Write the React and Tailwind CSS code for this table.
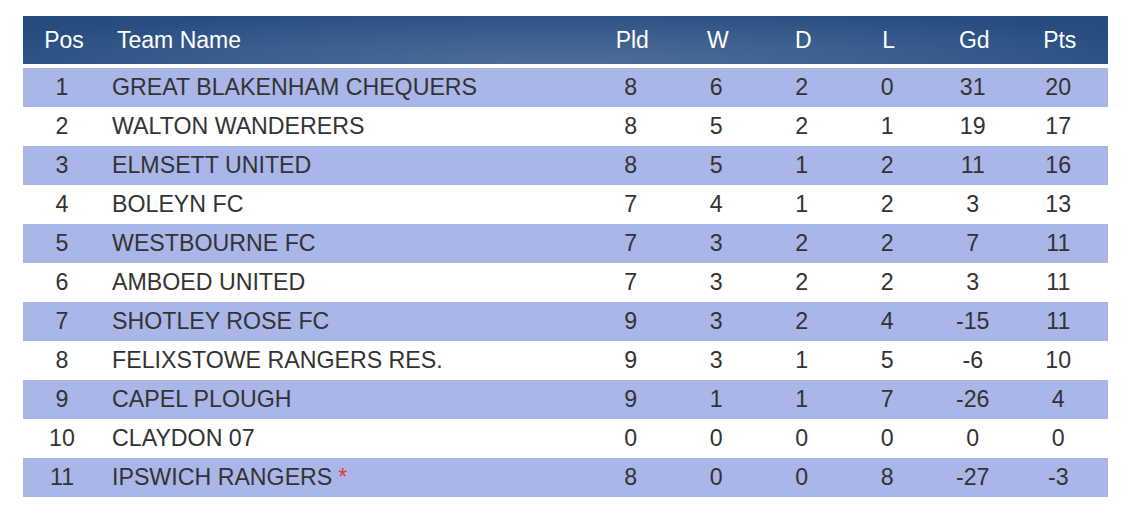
const rows = [
  [1, "GREAT BLAKENHAM CHEQUERS", 8, 6, 2, 0, 31, 20],
  [2, "WALTON WANDERERS", 8, 5, 2, 1, 19, 17],
  [3, "ELMSETT UNITED", 8, 5, 1, 2, 11, 16],
  [4, "BOLEYN FC", 7, 4, 1, 2, 3, 13],
  [5, "WESTBOURNE FC", 7, 3, 2, 2, 7, 11],
  [6, "AMBOED UNITED", 7, 3, 2, 2, 3, 11],
  [7, "SHOTLEY ROSE FC", 9, 3, 2, 4, -15, 11],
  [8, "FELIXSTOWE RANGERS RES.", 9, 3, 1, 5, -6, 10],
  [9, "CAPEL PLOUGH", 9, 1, 1, 7, -26, 4],
  [10, "CLAYDON 07", 0, 0, 0, 0, 0, 0],
  [11, "IPSWICH RANGERS", 8, 0, 0, 8, -27, -3, true],
];

const heads = ["Pld", "W", "D", "L", "Gd", "Pts"];

export default function App() {
  return (
    <div className="min-h-[523px] w-[1130px] bg-white pt-[16px] pl-[23px] font-['Liberation_Sans',Arial,sans-serif]">
      <div className="w-[1085px]">
        {/* header */}
        <div className="flex h-[48px] items-center bg-[radial-gradient(ellipse_60%_120%_at_50%_100%,#4e6e99_0%,#3d608f_45%,#264c80_100%)] text-[23px] text-white">
          <div className="w-[78px] pl-[4px] text-center">Pos</div>
          <div className="flex-1 pl-[16px]">Team Name</div>
          {heads.map((h) => (
            <div key={h} className="w-[85.5px] pl-[3px] text-center">
              {h}
            </div>
          ))}
          <div className="w-[7px]" />
        </div>

        {/* rows */}
        <div className="mt-[4px]">
          {rows.map((r, i) => (
            <div
              key={r[0]}
              className={`flex h-[39px] items-center text-[23.2px] text-[#333333] ${
                i % 2 === 0 ? "bg-[#a9b6e7]" : "bg-white"
              }`}
            >
              <div className="w-[78px] text-center">{r[0]}</div>
              <div className="flex-1 pl-[11px]">
                {r[1]}
                {r[8] && <span className="ml-[6px] text-[#e53935]">*</span>}
              </div>
              {r.slice(2, 8).map((v, j) => (
                <div key={j} className="w-[85.5px] text-center">
                  {v}
                </div>
              ))}
              <div className="w-[7px]" />
            </div>
          ))}
        </div>
      </div>
    </div>
  );
}
